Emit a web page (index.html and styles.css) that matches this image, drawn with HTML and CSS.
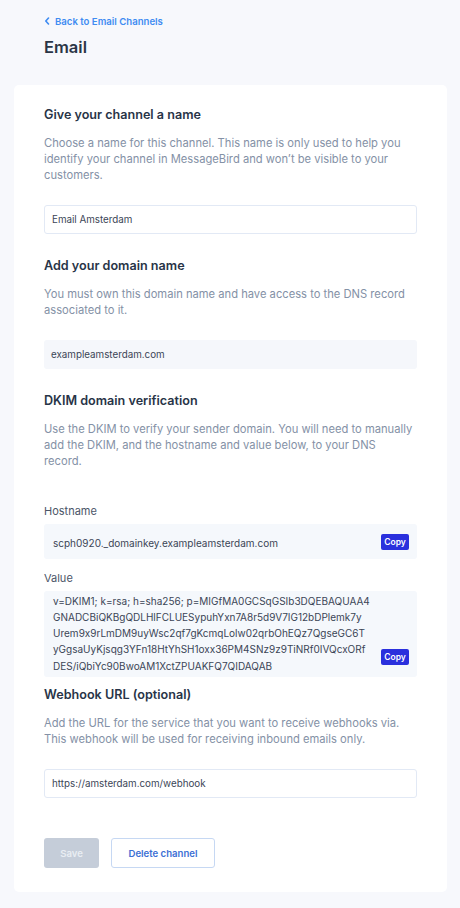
FILE: index.html
```html
<!DOCTYPE html>
<html lang="en">
<head>
<meta charset="utf-8">
<title>Email</title>
<link rel="stylesheet" href="styles.css">
</head>
<body>
<div class="page">
  <header class="page-header">
    <a class="back-link" href="#">
      <svg class="chev" width="6" height="8" viewBox="0 0 6 8"><path d="M4.5 1 L1.8 4 L4.5 7" fill="none" stroke="currentColor" stroke-width="1.6" stroke-linecap="round" stroke-linejoin="round"/></svg>
      <span>Back to Email Channels</span>
    </a>
    <h1 class="title">Email</h1>
  </header>

  <main class="card">
    <section class="section">
      <h2 class="section-title">Give your channel a name</h2>
      <p class="section-desc">Choose a name for this channel. This name is only used to help you identify your channel in MessageBird and won’t be visible to your customers.</p>
      <div class="field field-bordered">Email Amsterdam</div>
    </section>

    <section class="section">
      <h2 class="section-title">Add your domain name</h2>
      <p class="section-desc">You must own this domain name and have access to the DNS record associated to it.</p>
      <div class="field field-filled">exampleamsterdam.com</div>
    </section>

    <section class="section section-dkim">
      <h2 class="section-title">DKIM domain verification</h2>
      <p class="section-desc">Use the DKIM to verify your sender domain. You will need to manually add the DKIM, and the hostname and value below, to your DNS<br>record.</p>
      <div class="record record-host">
        <div class="record-label">Hostname</div>
        <div class="record-box">
          <span class="record-text">scph0920._domainkey.exampleamsterdam.com</span>
          <button class="copy-btn">Copy</button>
        </div>
      </div>
      <div class="record record-value">
        <div class="record-label">Value</div>
        <div class="record-box record-box-multi">
          <span class="record-text">v=DKIM1; k=rsa; h=sha256; p=MIGfMA0GCSqGSIb3DQEBAQUAA4<br>GNADCBiQKBgQDLHlFCLUESypuhYxn7A8r5d9V7IG12bDPlemk7y<br>Urem9x9rLmDM9uyWsc2qf7gKcmqLolw02qrbOhEQz7QgseGC6T<br>yGgsaUyKjsqg3YFn18HtYhSH1oxx36PM4SNz9z9TiNRf0IVQcxORf<br>DES/iQbiYc90BwoAM1XctZPUAKFQ7QIDAQAB</span>
          <button class="copy-btn">Copy</button>
        </div>
      </div>
    </section>

    <section class="section section-last">
      <h2 class="section-title">Webhook URL (optional)</h2>
      <p class="section-desc">Add the URL for the service that you want to receive webhooks via. This webhook will be used for receiving inbound emails only.</p>
      <div class="field field-bordered">https://amsterdam.com/webhook</div>
    </section>

    <div class="actions">
      <button class="btn btn-save">Save</button>
      <button class="btn btn-delete">Delete channel</button>
    </div>
  </main>
</div>
</body>
</html>
```

FILE: styles.css
```css
* { box-sizing: border-box; }
html, body { margin: 0; padding: 0; }
body {
  background: #f7f8fc;
  font-family: Inter, "Noto Sans", sans-serif;
  font-feature-settings: "calt" 0;
  color: #283447;
  width: 460px;
  height: 908px;
  overflow: hidden;
}
.page { padding: 14px 14px 0 14px; }
.page-header { padding-left: 30px; }
.back-link {
  display: flex;
  align-items: center;
  gap: 5px;
  height: 14px;
  color: #3f8cf2;
  text-decoration: none;
  font-size: 9.6px;
  font-weight: 600;
}
.chev { display: block; }
.title {
  margin: 7px 0 0 0;
  font-size: 16.5px;
  line-height: 24px;
  font-weight: 600;
  color: #2a3546;
}
.card {
  margin-top: 26px;
  width: 433px;
  background: #ffffff;
  border-radius: 5px;
  padding: 22px 30px 24px 30px;
}
.section { margin-bottom: 24px; }
.section-dkim { margin-bottom: 10px; }
.section-last { margin-bottom: 40px; }
.section-title {
  margin: 0;
  font-size: 12.6px;
  line-height: 16px;
  font-weight: 600;
  color: #283447;
}
.section-desc {
  margin: 12px 0 0 0;
  font-size: 11.2px;
  line-height: 16px;
  color: #8491a6;
}
.field {
  margin-top: 22px;
  height: 29px;
  display: flex;
  align-items: center;
  padding: 0 7px;
  font-size: 9.8px;
  color: #3b4556;
  border-radius: 3px;
}
.field-bordered { border: 1px solid #e2e9f5; }
.field-filled { background: #f5f7fb; }
.record-host { margin-top: 34px; }
.record-value { margin-top: 11px; }
.record-label {
  font-size: 11px;
  line-height: 16px;
  color: #4b5567;
  margin-bottom: 5px;
}
.record-box {
  background: #f5f8fc;
  border-radius: 3px;
  display: flex;
  align-items: center;
  justify-content: space-between;
  height: 35px;
  padding: 0 8px 0 9px;
}
.record-text {
  font-size: 10px;
  line-height: 16.3px;
  color: #3b4556;
  padding-top: 3px;
}
.record-box-multi {
  height: 86px;
  align-items: flex-end;
  padding-top: 2px;
  padding-bottom: 3px;
}
.record-box-multi .record-text { padding-top: 0; }
.record-box-multi .copy-btn { margin-bottom: 9px; }
.copy-btn {
  border: 0;
  background: #2a30dd;
  color: #ffffff;
  font-family: Inter, "Noto Sans", sans-serif;
  font-size: 8.5px;
  font-weight: 600;
  width: 28px;
  height: 16px;
  padding: 0;
  border-radius: 2px;
  flex: none;
}
.actions {
  display: flex;
  gap: 12px;
}
.btn {
  height: 30px;
  border-radius: 3px;
  font-family: Inter, "Noto Sans", sans-serif;
  font-size: 9.6px;
  font-weight: 600;
  padding: 0;
}
.btn-save {
  width: 55px;
  background: #c5cdd9;
  color: #e9edf3;
  border: 0;
}
.btn-delete {
  width: 104px;
  background: #ffffff;
  color: #3c6fd4;
  border: 1px solid #c6d8f3;
}
```
